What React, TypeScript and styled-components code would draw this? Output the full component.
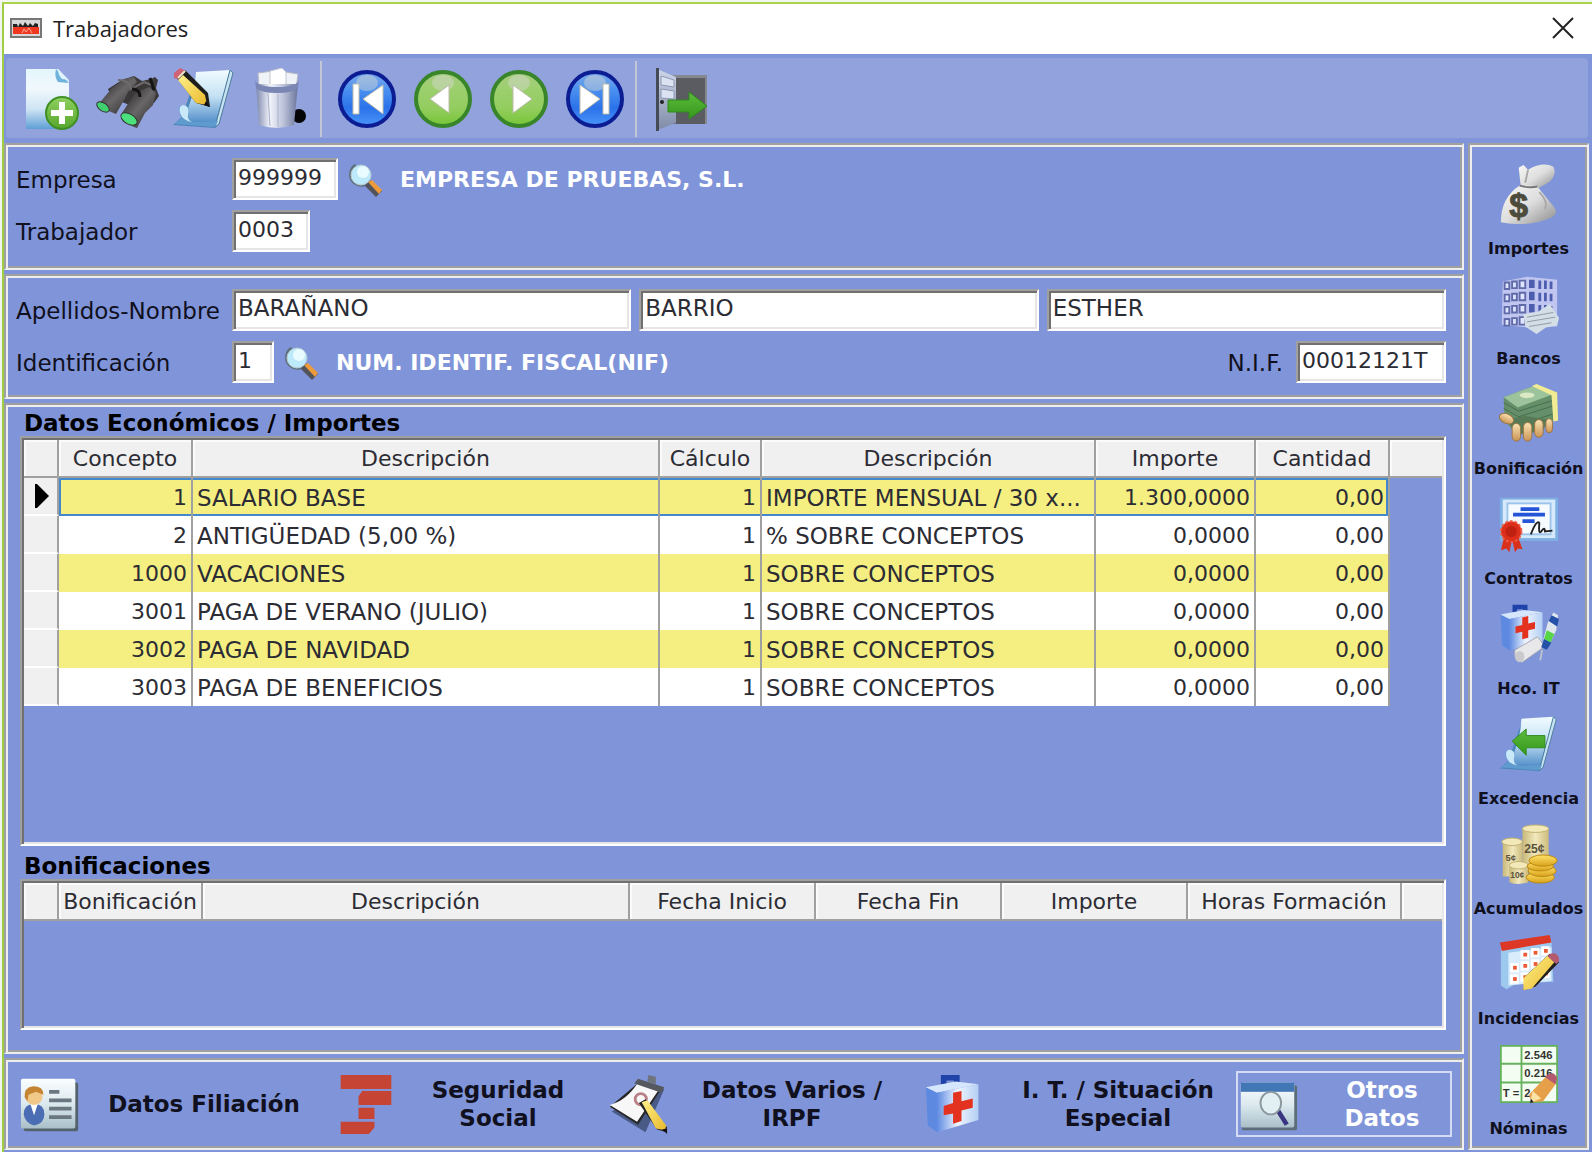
import React from "react";
import styled, { createGlobalStyle, css } from "styled-components";

const color = {
  panel: "#8095d9",
  bar: "#91a2dd",
  shade: "#a0a0a0",
  deep: "#707070",
  light: "#eeeeee",
  ink: "#10101e",
  cell: "#2c2c34",
  face: "#f0f0f0",
  band: "#f5ef82",
  focus: "#4488cc",
};

const uiFont = `"DejaVu Sans", Verdana, sans-serif`;

const GlobalStyle = createGlobalStyle`
  *, *::before, *::after { box-sizing: border-box; }
  body { margin: 0; background: ${color.panel}; }
  button, input { font: inherit; color: inherit; }
`;

/* ---------- frames ---------- */

const groove = css`
  border: 2px solid;
  border-color: ${color.shade} ${color.light} ${color.light} ${color.shade};
  box-shadow: inset 2px 2px 0 ${color.light}, inset -2px -2px 0 ${color.shade};
`;

const Window = styled.div`
  display: flex;
  flex-direction: column;
  min-height: 100vh;
  padding: 2px 0 0 2px;
  background: linear-gradient(#f3f6f0, #f3f6f0) left / 2px 100% no-repeat,
    linear-gradient(#f3f6f0, #f3f6f0) top / 100% 2px no-repeat, ${color.panel};
  font-family: ${uiFont};
  font-size: 22px;
  color: ${color.ink};
`;

const Chrome = styled.div`
  flex: 1;
  display: flex;
  flex-direction: column;
  border-top: 2px solid #abd44c;
  border-left: 2px solid #9fce45;
`;

const TitleBar = styled.header`
  display: flex;
  align-items: center;
  gap: 11px;
  height: 50px;
  padding: 0 16px 3px 6px;
  background: #fff;
`;

const Title = styled.h1`
  flex: 1;
  margin: 0;
  font: 400 22px/28px "Open Sans", "Noto Sans", sans-serif;
  color: #222;
`;

const CloseButton = styled.button`
  display: flex;
  padding: 2px;
  border: 0;
  background: none;
`;

const ToolBar = styled.nav`
  height: 89px;
  padding: 4px 4px 5px 2px;
`;

const ToolBarFace = styled.div`
  display: flex;
  align-items: center;
  height: 100%;
  padding: 2px 0 0 8px;
  border-radius: 4px;
  background: ${color.bar};
`;

const ToolButton = styled.button`
  display: flex;
  justify-content: center;
  width: 76px;
  padding: 0;
  border: 0;
  background: none;
`;

const Divider = styled.span`
  width: 2px;
  height: 76px;
  margin: 0 7px 0 2px;
  background: #c3c6d4;
`;

const Body = styled.div`
  flex: 1;
  display: grid;
  grid-template-columns: minmax(0, 1fr) 121px;
  gap: 4px;
  padding: 0 3px 2px 0;
`;

const Main = styled.main`
  display: flex;
  flex-direction: column;
  gap: 4px;
`;

const FormPanel = styled.section<{ $bottom: number }>`
  ${groove}
  display: flex;
  flex-direction: column;
  gap: 10px;
  padding: 13px 16px ${(p) => p.$bottom}px 10px;
`;

const DataPanel = styled.section`
  ${groove}
  flex: 1;
  display: flex;
  flex-direction: column;
  padding: 5px 16px 22px 14px;
`;

/* ---------- form ---------- */

const FormRow = styled.div`
  display: flex;
  align-items: center;
  gap: 8px;
`;

const Label = styled.label<{ $wide?: boolean }>`
  width: ${(p) => (p.$wide ? "208px" : "auto")};
  padding: ${(p) => (p.$wide ? "2px 0 0" : "2px 5px 0 0")};
  font-size: 23px;
  line-height: 28px;
  white-space: nowrap;
`;

const Field = styled.input<{ $width?: number }>`
  ${(p) =>
    p.$width
      ? `width: ${p.$width}px; font-size: 22px;`
      : "flex: 1; min-width: 0; width: 0; font-size: 23px;"}
  height: 42px;
  padding: 0 2px 4px 4px;
  border: 2px solid;
  border-color: ${color.shade} #fff #fff ${color.shade};
  box-shadow: inset 2px 2px 0 ${color.deep}, inset -2px -2px 0 #e6e6e6;
  border-radius: 0;
  outline: 0;
  background: #fff;
  color: ${color.cell};
`;

const LookupButton = styled.button`
  display: flex;
  padding: 2px 2px 0;
  border: 0;
  background: none;
`;

const Lookup = styled.output`
  flex: 1;
  padding: 2px 0 0 8px;
  font-weight: 700;
  line-height: 28px;
  color: #fff;
`;

/* ---------- grids ---------- */

const GridTitle = styled.h2<{ $gap?: boolean }>`
  margin: ${(p) => (p.$gap ? "7px" : "0")} 0 0;
  padding-left: 4px;
  font-size: 23px;
  line-height: 26px;
  color: #000;
`;

const GridFrame = styled.div<{ $height?: number }>`
  ${(p) => (p.$height ? `height: ${p.$height}px;` : "flex: 1;")}
  border: 2px solid;
  border-color: ${color.shade} #fff #fff ${color.shade};
  box-shadow: inset 2px 2px 0 ${color.deep}, inset -2px -2px 0 #e6e6e6;
  padding: 2px;
`;

const Table = styled.table`
  width: 100%;
  table-layout: fixed;
  border-collapse: separate;
  border-spacing: 0;
`;

const HeadCell = styled.th`
  height: 38px;
  padding: 2px 0 0;
  border-right: 2px solid ${color.shade};
  border-bottom: 2px solid ${color.shade};
  background: ${color.face};
  box-shadow: inset 2px 2px 0 #fbfbfb;
  font-weight: 400;
  line-height: 28px;
  color: ${color.cell};
  white-space: nowrap;

  &:last-child {
    border-right: 0;
  }
`;

const Cell = styled.td<{ $num?: boolean }>`
  height: 38px;
  padding: 2px 4px 0;
  border-right: 2px solid ${color.shade};
  font-size: ${(p) => (p.$num ? "22px" : "23px")};
  line-height: 28px;
  text-align: ${(p) => (p.$num ? "right" : "left")};
  white-space: nowrap;
  overflow: hidden;
  color: ${color.cell};
`;

const Gutter = styled.td`
  padding: 0 0 0 11px;
  border-right: 2px solid ${color.shade};
  border-bottom: 2px solid #fff;
  background: ${color.face};
`;

const Row = styled.tr<{ $current?: boolean }>`
  &:nth-child(odd) ${Cell} {
    background: ${color.band};
  }
  &:nth-child(even) ${Cell} {
    background: #fff;
  }
  ${(p) =>
    p.$current &&
    css`
      ${Cell} {
        box-shadow: inset 0 2px 0 ${color.focus}, inset 0 -2px 0 ${color.focus};
      }
      ${Cell}:nth-child(2) {
        box-shadow: inset 2px 2px 0 ${color.focus}, inset 0 -2px 0 ${color.focus};
      }
      ${Cell}:nth-child(7) {
        box-shadow: inset 0 2px 0 ${color.focus}, inset -2px -2px 0 ${color.focus};
      }
    `}
`;

const Marker = styled.svg`
  display: block;
`;

/* ---------- bottom tabs and side bar ---------- */

const Tabs = styled.nav`
  ${groove}
  display: grid;
  grid-template-columns: 316fr 272fr 316fr 312fr 216fr;
  align-items: center;
  height: 92px;
  padding: 0 10px 0 14px;
`;

const Tab = styled.button<{ $active?: boolean }>`
  display: flex;
  align-items: center;
  height: 66px;
  padding: 0;
  border: ${(p) => (p.$active ? "2px solid #d4dcf4" : "0")};
  background: none;
  font-size: 23px;
  font-weight: 700;
  line-height: 28px;
  color: ${(p) => (p.$active ? "#fff" : color.ink)};

  svg {
    flex: none;
  }
`;

const TabText = styled.span<{ $far?: boolean }>`
  flex: 1;
  padding: ${(p) => (p.$far ? "0 0 0 16px" : "0 8px 0 0")};
  text-align: center;
  white-space: pre-line;
`;

const SideBar = styled.aside`
  ${groove}
  display: flex;
  flex-direction: column;
  justify-content: space-between;
  padding: 19px 0 9px;
`;

const SideButton = styled.button`
  display: flex;
  flex-direction: column;
  align-items: center;
  gap: 15px;
  padding: 0;
  border: 0;
  background: none;
  font-size: 16px;
  font-weight: 700;
  line-height: 20px;
`;

/* ---------- drawings ---------- */

type IconProps = { size?: number; children?: React.ReactNode };

const Icon = ({ size = 60, children }: IconProps) => (
  <svg width={size} height={size} viewBox="0 0 64 64" aria-hidden="true">
    {children}
  </svg>
);

const Stops = ({ id, list, slant }: { id: string; list: string[]; slant?: "h" | "d" }) => (
  <linearGradient id={id} x1="0" y1="0" x2={slant ? "1" : "0"} y2={slant === "h" ? "0" : "1"}>
    {list.map((c, i) => (
      <stop key={i} offset={i / (list.length - 1)} stopColor={c} />
    ))}
  </linearGradient>
);

const Logo = () => (
  <svg width="32" height="20" viewBox="0 0 32 20" aria-hidden="true">
    <defs>
      <Stops id="paper" list={["#e4f6fe", "#f0f8fc", "#cfe4f4", "#5f9fd6"]} />
      <Stops id="sheet" list={["#f2fbff", "#c4e2f4", "#5791cb"]} />
      <Stops id="leaf" list={["#8fd060", "#58a62c"]} />
      <Stops id="arrow" list={["#5cbb3c", "#35981c"]} />
      <Stops id="steel" list={["#7c86ac", "#f2f4fb", "#b9c0d8", "#6a7499"]} slant="h" />
      <Stops id="blue" list={["#7fabea", "#4a90f0", "#2b72ea", "#4a96fa"]} />
      <Stops id="green" list={["#a9cd84", "#9bcf6c", "#93cd5f", "#76c636"]} />
      <Stops id="bag" list={["#f8f8f6", "#dedede", "#8b8b8b"]} slant="d" />
      <Stops id="kit" list={["#5f8be2", "#eef5ff", "#b4cff4"]} slant="h" />
      <Stops id="pencil" list={["#fff08a", "#e9b92c"]} slant="d" />
      <Stops id="card" list={["#fafeff", "#dce9ef", "#a9bfc9"]} />
      <Stops id="coin" list={["#c8b878", "#f1e8bd", "#cdbb7c"]} slant="h" />
      <Stops id="gold" list={["#ffe36a", "#d9a21c"]} />
      <Stops id="tube" list={["#161616", "#6a6769", "#202020"]} slant="d" />
      <Stops id="skin" list={["#fbe3b4", "#c99352"]} />
      <Stops id="door" list={["#cdd6ea", "#7f8ba6"]} />
    </defs>
    <rect x="1" y="1" width="30" height="18" fill="#d8d8d8" stroke="#777" strokeWidth="2" />
    <path d="M3 6h4l1 3 2-4 3 3 2-4 3 4 2-3 3 3 2-3 3 1v4H3z" fill="#222" />
    <rect x="3" y="9" width="26" height="7" fill="#f0371f" />
    <path d="M12 15l2-4 2 3 3-4 3 5" fill="none" stroke="#ffb09c" strokeWidth="1" />
  </svg>
);

const NewIcon = () => (
  <Icon size={64}>
    <path d="M6 2h32l11 12v48H6z" fill="url(#paper)" />
    <path d="M36 2l13 14-11-1q-4-5-2-13z" fill="#6fb2dc" />
    <path d="M38 2l11 11-7-1q-4-4-4-10z" fill="#dff3fd" />
    <circle cx="42" cy="46" r="16" fill="url(#leaf)" stroke="#3f8f22" strokeWidth="2" />
    <path d="M42 35v22M31 46h22" stroke="#fff" strokeWidth="6" />
  </Icon>
);

const BinocularsIcon = () => (
  <Icon size={64}>
    <path d="M12 22l14-9 12-4 8 5 9-2 4-2 3 3-2 8 3 8-5 7-10-1-12 4-20-8z" fill="#3b3839" />
    <path d="M16 21l12-9 10-2 3 5-9 10-4 8-8 14L1 39z" fill="url(#tube)" />
    <path d="M26 46l13-20 14-6 7 6-3 12-8 8-8 15q-8-2-15-11z" fill="url(#tube)" />
    <path d="M22 13q12 0 13 9l13-7 10 4" fill="none" stroke="#6e6b6c" strokeWidth="2" />
    <path d="M36 22q8 0 8 8M54 11l4 12" fill="none" stroke="#151515" strokeWidth="3" />
    <ellipse cx="7" cy="40" rx="7" ry="4" transform="rotate(34 7 40)" fill="#41d070" stroke="#333" />
    <ellipse cx="33" cy="52" rx="9" ry="5" transform="rotate(30 33 52)" fill="#4be07c" stroke="#333" />
  </Icon>
);

const Sheet = () => (
  <>
    <path d="M25 6l35-1-13 52-4 4-42-3 9-8z" fill="#4b86b8" />
    <path d="M24 5l34-2-14 51-34 1q13-26 14-50z" fill="url(#sheet)" />
    <path d="M58 3l3 3-14 51-4 3z" fill="#c7e3f1" stroke="#4a7c9c" strokeWidth="1" />
    <path d="M2 57l8-6q-7-12 1-13 8 1 5 9-1 7 6 8l24-1-3 6z" fill="#5f9bcf" />
    <path d="M8 46q-2-8 4-8 6 2 4 9-1 6 4 8-9-1-12-9z" fill="#c9e8f8" />
  </>
);

const EditIcon = () => (
  <Icon size={64}>
    <Sheet />
    <path d="M4 10l9-7 23 23 2 14-14-4z" fill="#1d1d1d" />
    <path d="M6 13l5-5 22 20 2 10-11-2z" fill="url(#pencil)" />
    <path d="M2 6l6-5 6 3-8 8-4-1z" fill="#cf6273" />
    <path d="M6 11l7-7" stroke="#e9e3c8" strokeWidth="2" />
    <path d="M34 34l4 6-6-2z" fill="#111" />
  </Icon>
);

const TrashIcon = () => (
  <Icon size={64}>
    <ellipse cx="51" cy="49" rx="7" ry="7" fill="#050505" />
    <path d="M10 6l15-2 1 18H11zM37 5l13 2-2 15H36z" fill="#eff2f6" stroke="#b5b8c2" />
    <path d="M22 4l12-3 4 4v18H22z" fill="#fff" stroke="#c2c5cf" />
    <path d="M8 17h42l-4 41q-17 6-35 0z" fill="url(#steel)" />
    <path d="M7 13q2 7 22 7t22-7l-1 8q-5 5-21 5T8 21z" fill="#7a86b4" />
    <path d="M20 26l2 33M30 27v33M40 26l-2 33" stroke="#a9b1ca" strokeWidth="1" />
  </Icon>
);

const NavIcon = ({ fill, ring, children }: { fill: string; ring: string; children: React.ReactNode }) => (
  <Icon size={64}>
    <circle cx="32" cy="32" r="27" fill={`url(#${fill})`} stroke={ring} strokeWidth="4" />
    <ellipse cx="32" cy="16" rx="11" ry="8" fill="#d7dad2" opacity="0.45" />
    <g fill="#fff" stroke="#bcbcae" strokeWidth="1">
      {children}
    </g>
  </Icon>
);

const ExitIcon = () => (
  <Icon size={64}>
    <path d="M20 8h37v49H20z" fill="#5a5c62" />
    <path d="M20 8h37v3H20zM55 8h2v49h-2z" fill="#85888f" />
    <path d="M7 2l19 8v46L7 63z" fill="url(#door)" />
    <path d="M6 1h3v63H6z" fill="#454a57" />
    <path d="M11 9l13 4v7l-13-2zM11 22l13 2v8l-13-1z" fill="#dbe3f2" stroke="#8d98b0" />
    <circle cx="12" cy="35" r="2" fill="#222" />
    <path d="M18 33h21v-8l18 14-18 13v-7H18z" fill="url(#arrow)" stroke="#2f8a1c" />
  </Icon>
);

const LensIcon = () => (
  <svg width="34" height="34" viewBox="0 0 34 34" aria-hidden="true">
    <path d="M16 22l6-5 12 11-6 6z" fill="#53535c" />
    <path d="M20 19l4-2 10 10-3 4z" fill="#eb9a3c" />
    <path d="M1 12q0-8 6-11l14 18-6 5Q2 23 1 12z" fill="#5d707c" />
    <circle cx="13" cy="12" r="10" fill="#bdeafa" stroke="#b9ccd4" strokeWidth="1" />
    <circle cx="15" cy="9" r="6" fill="#e9fbff" />
  </svg>
);

const BagIcon = () => (
  <Icon>
    <path d="M23 22L21 4l5-3 5 5q16-9 27-3 4 8-4 16l-14 8z" fill="url(#bag)" />
    <path d="M22 23h18l18 22q6 7-2 12-24 11-54 5 0-26 20-39z" fill="url(#bag)" />
    <path d="M22 23q10 3 19 1" stroke="#777" strokeWidth="2" fill="none" />
    <path d="M31 6l-3 14M43 30q10 10 6 18" stroke="#a8a8a8" strokeWidth="2" fill="none" />
    <text x="11" y="57" fontSize="36" fontFamily="Liberation Sans, sans-serif" fill="#4c4c3c" stroke="#4c4c3c">$</text>
  </Icon>
);

const BankIcon = () => (
  <Icon>
    <path d="M4 8l26-5v54L3 54zM30 3l32 3v50H30z" fill="#c0c6f0" />
    {[8, 21, 34, 47].map((y) => (
      <g key={y}>
        <path d={`M6 ${y + 1}h5v7H6zM14 ${y}h5v7h-5zM22 ${y - 1}h6v8h-6z`} fill="#dfe5ff" stroke="#606aa8" strokeWidth="2" />
        <path d={`M32 ${y - 2}h6v9h-6zM42 ${y - 1}h3v9h-3zM48 ${y - 1}h3v9h-3zM54 ${y}h3v8h-3z`} fill="#4d5eae" />
      </g>
    ))}
    <path d="M26 43l16-3 12-8 10 15-2 8-12 2-10 7-12-8z" fill="#d4dee6" />
    <path d="M30 46l28-5M30 51l30-5M32 56l24-4" stroke="#8b98a4" strokeWidth="1" />
  </Icon>
);

const CashIcon = () => (
  <Icon>
    <path d="M5 14L40 1l20 9-2 30-40 14L6 38z" fill="#648f69" />
    <path d="M5 14L40 1l20 9-40 15z" fill="#9cc39b" />
    <path d="M5 26l16 9 38-12M5 20l16 9 38-12M8 38l14 5 36-11" fill="none" stroke="#456d4b" strokeWidth="1" />
    <path d="M40 0l22 9 1 30-5 1-2-28-21-10z" fill="#f1ec94" />
    <ellipse cx="30" cy="12" rx="8" ry="3" fill="#dbe9c4" />
    <path d="M8 38l20-4 26 4-8 12-26 4z" fill="#567a55" />
    <g fill="url(#skin)" stroke="#9b7342" strokeWidth="1">
      <ellipse cx="8" cy="37" rx="8" ry="5" transform="rotate(25 8 37)" />
      <rect x="14" y="42" width="9" height="19" rx="5" />
      <rect x="26" y="41" width="9" height="20" rx="5" />
      <rect x="38" y="38" width="9" height="19" rx="5" />
      <rect x="50" y="37" width="7" height="15" rx="4" />
    </g>
  </Icon>
);

const ContractIcon = () => (
  <Icon>
    <rect x="1" y="4" width="62" height="46" fill="#7fb0e4" />
    <rect x="4" y="6" width="56" height="41" fill="#d6eafb" />
    <rect x="9" y="10" width="46" height="33" fill="#f6fbff" stroke="#9cc3ea" strokeWidth="2" />
    <path d="M23 16h20M15 22h34M25 29h13" stroke="#2454d8" strokeWidth="4" />
    <path d="M34 43q6-16 9-12-1 13 2 9 4-6 4 0l8-1" fill="none" stroke="#222" strokeWidth="2" />
    <path d="M6 44l-4 16 6-2 3 4 3-14 3 14 3-4 5 1-6-17z" fill="#d9301c" />
    <circle cx="13" cy="40" r="11" fill="#dc2f1b" stroke="#ee5a44" strokeWidth="2" strokeDasharray="3 2" />
    <circle cx="13" cy="40" r="6" fill="#bf2110" />
  </Icon>
);

const Kit = () => (
  <>
    <path d="M21 11V4h14v7" fill="none" stroke="#1f43a8" strokeWidth="6" />
    <path d="M2 14l12 6v42L4 55z" fill="#5d8ae0" />
    <path d="M2 14l32-6 24 3-44 9z" fill="#d5e6fd" />
    <path d="M14 20l44-9v38L14 62z" fill="url(#kit)" />
  </>
);

const SickIcon = () => (
  <Icon>
    <g transform="scale(0.8 0.8)">
      <Kit />
      <path d="M31 18l8-2v10l9-2v9l-9 2v10l-8 2V37l-9 2v-9l9-2z" fill="#e3321f" />
    </g>
    <path d="M17 49l24-14 8 10-24 17q-10 0-8-13z" fill="#e8e8ea" stroke="#a8a8ae" />
    <ellipse cx="22" cy="56" rx="5" ry="6" fill="#c9c9ce" />
    <path d="M45 46l7-26 6-11 5 3-2 16-10 21z" fill="#dfe6ee" />
    <path d="M45 46l3-9 8 4-5 8zM53 18l3-6 8 4-2 8z" fill="#2450a8" />
    <path d="M48 37l3-9 8 4-4 9z" fill="#57d648" />
    <path d="M46 49l-2 11" stroke="#bcc3cc" strokeWidth="2" />
  </Icon>
);

const LeaveIcon = () => (
  <Icon>
    <Sheet />
    <path d="M14 29l15-13v7h20v13H29v8z" fill="url(#arrow)" stroke="#2f8a1c" />
  </Icon>
);

const coinText = { fontFamily: "Liberation Sans, sans-serif", fontWeight: 700, fill: "#5b5340" };

const CoinsIcon = () => (
  <Icon>
    <path d="M25 5h28v38H25z" fill="url(#coin)" />
    <ellipse cx="39" cy="5" rx="14" ry="4" fill="#f3e9b8" stroke="#bfae70" />
    <path d="M4 20h21v36H4z" fill="url(#coin)" />
    <ellipse cx="14" cy="19" rx="11" ry="4" fill="#f3e9b8" stroke="#bfae70" />
    <path d="M11 44h20v18q-10 4-20 0z" fill="url(#coin)" />
    <ellipse cx="21" cy="44" rx="10" ry="4" fill="#f3e9b8" stroke="#bfae70" />
    <text x="27" y="31" fontSize="13" {...coinText}>25¢</text>
    <text x="7" y="39" fontSize="10" {...coinText}>5¢</text>
    <text x="12" y="58" fontSize="9" {...coinText}>10¢</text>
    <g fill="url(#gold)" stroke="#b9860f">
      <ellipse cx="44" cy="57" rx="15" ry="6" />
      <ellipse cx="46" cy="50" rx="15" ry="6" />
      <ellipse cx="44" cy="45" rx="14" ry="5" />
      <ellipse cx="47" cy="39" rx="15" ry="6" />
    </g>
  </Icon>
);

const CalendarIcon = () => (
  <Icon>
    <path d="M2 12l54-5 2 44-40 2-10 6-6-4z" fill="#9dc9ef" />
    <path d="M10 20l46-6v36l-46 5z" fill="#d9ecfb" />
    <path d="M1 9L54 1l2 8L3 18z" fill="#dd3826" />
    {[0, 1, 2].map((r) =>
      [0, 1, 2, 3].map((c) =>
        r === 0 && c === 0 ? null : (
          <g key={`${r}${c}`}>
            <rect x={12 + c * 11} y={19 + r * 12 - c * 2} width="9" height="10" fill="#fff" />
            <rect x={15 + c * 11} y={22 + r * 12 - c * 2} width="4" height="4" fill="#ea5a34" />
          </g>
        )
      )
    )}
    <path d="M28 45l26-24 10 9-25 26-13 4z" fill="#1f1f1f" />
    <path d="M26 47l26-24 7 7-24 28-9 2z" fill="url(#pencil)" />
    <path d="M53 22q9-5 12 6l-4 4-9-8z" fill="#b45a70" />
  </Icon>
);

const sheetText = { fontFamily: "Liberation Sans, sans-serif", fontSize: 12, fill: "#333" };

const PayrollIcon = () => (
  <Icon>
    <rect x="2" y="2" width="60" height="60" fill="#f4fdf2" stroke="#66b25c" strokeWidth="2" />
    <path d="M24 2v60M2 21h60M2 41h60" stroke="#66b25c" strokeWidth="2" />
    <text x="27" y="16" {...sheetText}>2.546</text>
    <text x="27" y="35" {...sheetText}>0.216</text>
    <text x="4" y="56" {...sheetText}>T =</text>
    <text x="27" y="56" {...sheetText}>2.7</text>
    <path d="M32 54l18-19 11 7-14 19-12 1z" fill="#e7a04a" />
    <path d="M36 50l9 8-12 5z" fill="#fbe3a6" />
    <path d="M50 34q9-7 12 3l-2 6-10-7z" fill="#b45a70" />
    <path d="M33 63l4-1-3-4z" fill="#222" />
  </Icon>
);

const PersonIcon = () => (
  <Icon>
    <rect x="4" y="9" width="58" height="52" rx="2" fill="#53626c" />
    <rect x="1" y="5" width="58" height="53" rx="2" fill="url(#card)" />
    <path d="M4 43q0-11 11-11t11 11q0 10-11 12-10-3-11-12z" fill="#4a6db4" />
    <path d="M11 32l4 12 4-12z" fill="#fff" />
    <circle cx="15" cy="24" r="9" fill="#f0c989" />
    <path d="M5 25q-1-11 9-12 11 0 11 9l-8-3-8 3-1 7z" fill="#c58431" />
    <path d="M31 19h11M31 28h24M31 37h24M31 46h24" stroke="#6b7780" strokeWidth="4" />
  </Icon>
);

const SocialIcon = () => (
  <Icon>
    <g fill="#c54433">
      <path d="M5 1h54v15H5zM28 18h31v15H24v-9zM24 36h17v12H24zM5 51h36v6l-6 7H5z" />
    </g>
  </Icon>
);

const VariousIcon = () => (
  <Icon>
    <path d="M4 40l36 22 20-46-5-2z" fill="#4a5a86" />
    <path d="M2 35l30 19 26-40-24-6z" fill="#262626" />
    <path d="M2 33l29 18L56 14 32 9Q20 28 2 33z" fill="#f7f7f7" />
    <path d="M28 10l4-5 28 9-3 6z" fill="#55585f" />
    <path d="M43 1l8 2v8l-9-3z" fill="#6f737c" />
    <circle cx="35" cy="27" r="6" fill="none" stroke="#b98088" strokeWidth="3" />
    <path d="M33 31l7-4 23 30-1 5-10-3z" fill="#222" />
    <path d="M36 30l6-2 20 27-1 5-10-2z" fill="url(#pencil)" />
    <path d="M58 59l5-1v6z" fill="#111" />
  </Icon>
);

const KitIcon = () => (
  <Icon>
    <Kit />
    <path d="M31 20l9-2v11l12-3v10l-12 3v11l-9 3V42l-10 2V34l10-3z" fill="#e3321f" />
  </Icon>
);

const OtherIcon = () => (
  <Icon>
    <rect x="4" y="12" width="59" height="48" rx="2" fill="#5c6c78" />
    <rect x="3" y="9" width="57" height="48" rx="2" fill="url(#card)" />
    <rect x="3" y="9" width="57" height="10" fill="#4177b4" />
    <path d="M42 38l10 16" stroke="#393583" strokeWidth="5" />
    <ellipse cx="35" cy="31" rx="11" ry="12" fill="#e2f0f4" stroke="#8a979e" strokeWidth="2" />
  </Icon>
);

/* ---------- data ---------- */

type Concept = [string, string, string, string, string, string];

const concepts: Concept[] = [
  ["1", "SALARIO BASE", "1", "IMPORTE MENSUAL / 30 x...", "1.300,0000", "0,00"],
  ["2", "ANTIGÜEDAD (5,00 %)", "1", "% SOBRE CONCEPTOS", "0,0000", "0,00"],
  ["1000", "VACACIONES", "1", "SOBRE CONCEPTOS", "0,0000", "0,00"],
  ["3001", "PAGA DE VERANO (JULIO)", "1", "SOBRE CONCEPTOS", "0,0000", "0,00"],
  ["3002", "PAGA DE NAVIDAD", "1", "SOBRE CONCEPTOS", "0,0000", "0,00"],
  ["3003", "PAGA DE BENEFICIOS", "1", "SOBRE CONCEPTOS", "0,0000", "0,00"],
];

const conceptColumns = [
  { name: "", width: 35 },
  { name: "Concepto", width: 134 },
  { name: "Descripción" },
  { name: "Cálculo", width: 102 },
  { name: "Descripción", width: 334 },
  { name: "Importe", width: 160 },
  { name: "Cantidad", width: 134 },
  { name: "", width: 52 },
];

const bonusColumns = [
  { name: "", width: 35 },
  { name: "Bonificación", width: 144 },
  { name: "Descripción" },
  { name: "Fecha Inicio", width: 186 },
  { name: "Fecha Fin", width: 186 },
  { name: "Importe", width: 186 },
  { name: "Horas Formación", width: 214 },
  { name: "", width: 40 },
];

const sections = [
  { name: "Importes", Art: BagIcon },
  { name: "Bancos", Art: BankIcon },
  { name: "Bonificación", Art: CashIcon },
  { name: "Contratos", Art: ContractIcon },
  { name: "Hco. IT", Art: SickIcon },
  { name: "Excedencia", Art: LeaveIcon },
  { name: "Acumulados", Art: CoinsIcon },
  { name: "Incidencias", Art: CalendarIcon },
  { name: "Nóminas", Art: PayrollIcon },
];

const tabs = [
  { name: "Datos Filiación", Art: PersonIcon },
  { name: "Seguridad\nSocial", Art: SocialIcon },
  { name: "Datos Varios /\nIRPF", Art: VariousIcon },
  { name: "I. T. / Situación\nEspecial", Art: KitIcon, far: true },
  { name: "Otros\nDatos", Art: OtherIcon, far: true, active: true },
];

const TableHead = ({ columns }: { columns: { name: string; width?: number }[] }) => (
  <>
    <colgroup>
      {columns.map((c, i) => (
        <col key={i} width={c.width} />
      ))}
    </colgroup>
    <thead>
      <tr>
        {columns.map((c, i) => (
          <HeadCell key={i}>{c.name}</HeadCell>
        ))}
      </tr>
    </thead>
  </>
);

export default function App() {
  return (
    <Window>
      <GlobalStyle />
      <Chrome>
        <TitleBar>
          <Logo />
          <Title>Trabajadores</Title>
          <CloseButton aria-label="Cerrar">
            <svg width="22" height="22" viewBox="0 0 22 22" aria-hidden="true">
              <path d="M1 1l20 20M21 1L1 21" stroke="#222" strokeWidth="2" />
            </svg>
          </CloseButton>
        </TitleBar>

        <ToolBar>
          <ToolBarFace>
            <ToolButton aria-label="Nuevo"><NewIcon /></ToolButton>
            <ToolButton aria-label="Buscar"><BinocularsIcon /></ToolButton>
            <ToolButton aria-label="Modificar"><EditIcon /></ToolButton>
            <ToolButton aria-label="Borrar"><TrashIcon /></ToolButton>
            <Divider />
            <ToolButton aria-label="Primero">
              <NavIcon fill="blue" ring="#0c1d94">
                <path d="M18 17h6v30h-6zM48 18v29L28 32z" />
              </NavIcon>
            </ToolButton>
            <ToolButton aria-label="Anterior">
              <NavIcon fill="green" ring="#38852a">
                <path d="M38 18v28L19 32z" />
              </NavIcon>
            </ToolButton>
            <ToolButton aria-label="Siguiente">
              <NavIcon fill="green" ring="#38852a">
                <path d="M26 18v28l19-14z" />
              </NavIcon>
            </ToolButton>
            <ToolButton aria-label="Último">
              <NavIcon fill="blue" ring="#0c1d94">
                <path d="M40 17h6v30h-6zM17 18v29l20-15z" />
              </NavIcon>
            </ToolButton>
            <Divider />
            <ToolButton aria-label="Salir"><ExitIcon /></ToolButton>
          </ToolBarFace>
        </ToolBar>

        <Body>
          <Main>
            <FormPanel $bottom={16}>
              <FormRow>
                <Label $wide htmlFor="empresa">Empresa</Label>
                <Field id="empresa" $width={106} defaultValue="999999" />
                <LookupButton aria-label="Buscar empresa"><LensIcon /></LookupButton>
                <Lookup>EMPRESA DE PRUEBAS, S.L.</Lookup>
              </FormRow>
              <FormRow>
                <Label $wide htmlFor="trabajador">Trabajador</Label>
                <Field id="trabajador" $width={78} defaultValue="0003" />
              </FormRow>
            </FormPanel>

            <FormPanel $bottom={14}>
              <FormRow>
                <Label $wide htmlFor="apellido1">Apellidos-Nombre</Label>
                <Field id="apellido1" defaultValue="BARAÑANO" />
                <Field aria-label="Segundo apellido" defaultValue="BARRIO" />
                <Field aria-label="Nombre" defaultValue="ESTHER" />
              </FormRow>
              <FormRow>
                <Label $wide htmlFor="identificacion">Identificación</Label>
                <Field id="identificacion" $width={42} defaultValue="1" />
                <LookupButton aria-label="Buscar identificación"><LensIcon /></LookupButton>
                <Lookup>NUM. IDENTIF. FISCAL(NIF)</Lookup>
                <Label htmlFor="nif">N.I.F.</Label>
                <Field id="nif" $width={150} defaultValue="00012121T" />
              </FormRow>
            </FormPanel>

            <DataPanel>
              <GridTitle>Datos Económicos / Importes</GridTitle>
              <GridFrame>
                <Table>
                  <TableHead columns={conceptColumns} />
                  <tbody>
                    {concepts.map((row, r) => (
                      <Row key={row[0]} $current={r === 0}>
                        <Gutter>
                          {r === 0 && (
                            <Marker width="14" height="24" viewBox="0 0 14 24" aria-hidden="true">
                              <path d="M0 0h2l12 12L2 24H0z" fill="#000" />
                            </Marker>
                          )}
                        </Gutter>
                        {row.map((value, c) => (
                          <Cell key={c} $num={c !== 1 && c !== 3}>{value}</Cell>
                        ))}
                      </Row>
                    ))}
                  </tbody>
                </Table>
              </GridFrame>
              <GridTitle $gap>Bonificaciones</GridTitle>
              <GridFrame $height={151}>
                <Table>
                  <TableHead columns={bonusColumns} />
                </Table>
              </GridFrame>
            </DataPanel>

            <Tabs>
              {tabs.map(({ name, Art, far, active }) => (
                <Tab key={name} $active={active}>
                  <Art />
                  <TabText $far={far}>{name}</TabText>
                </Tab>
              ))}
            </Tabs>
          </Main>

          <SideBar>
            {sections.map(({ name, Art }) => (
              <SideButton key={name}>
                <Art />
                {name}
              </SideButton>
            ))}
          </SideBar>
        </Body>
      </Chrome>
    </Window>
  );
}
